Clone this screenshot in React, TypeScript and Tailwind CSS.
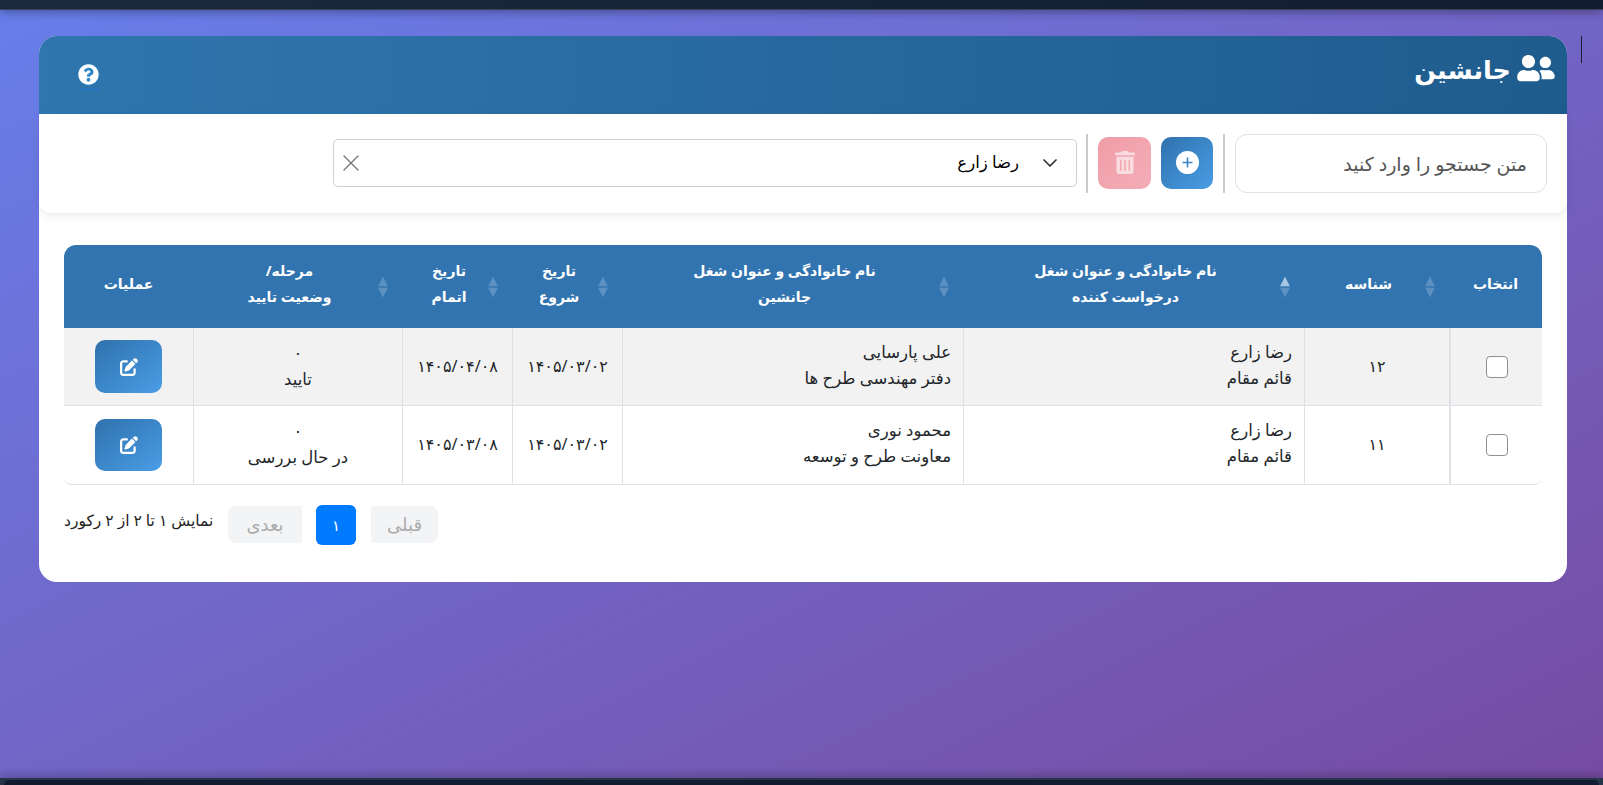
import { FaQuestionCircle, FaTrashAlt, FaUserFriends } from "react-icons/fa";
import { FaPenToSquare } from "react-icons/fa6";
import { ChevronDown, X } from "lucide-react";

const HEADERS = [
  { w: "w-[93px]", lines: ["انتخاب"], sort: false },
  { w: "w-[145px]", lines: ["شناسه"], sort: true },
  { w: "w-[341px]", lines: ["نام خانوادگی و عنوان شغل", "درخواست کننده"], sort: true, active: true },
  { w: "w-[341px]", lines: ["نام خانوادگی و عنوان شغل", "جانشین"], sort: true },
  { w: "w-[110px]", lines: ["تاریخ", "شروع"], sort: true },
  { w: "w-[110px]", lines: ["تاریخ", "اتمام"], sort: true },
  { w: "w-[209px]", lines: ["مرحله/", "وضعیت تایید"], sort: true },
  { w: "w-[129px]", lines: ["عملیات"], sort: false },
];

const ROWS = [
  { id: "۱۲", reqName: "رضا زارع", reqJob: "قائم مقام", subName: "علی پارسایی", subJob: "دفتر مهندسی طرح ها", start: "۱۴۰۵/۰۳/۰۲", end: "۱۴۰۵/۰۴/۰۸", status: "تایید", bg: "bg-[#f2f2f2]", h: "h-[78px]", btn: "h-[53px]", br: "", bl: "" },
  { id: "۱۱", reqName: "رضا زارع", reqJob: "قائم مقام", subName: "محمود نوری", subJob: "معاونت طرح و توسعه", start: "۱۴۰۵/۰۳/۰۲", end: "۱۴۰۵/۰۳/۰۸", status: "در حال بررسی", bg: "bg-white", h: "h-[79px]", btn: "h-[52px]", br: "rounded-br-[8px]", bl: "rounded-bl-[8px]" },
];

function SortIcon({ active }: { active?: boolean }) {
  return (
    <span className="absolute right-[14px] top-1/2 flex -translate-y-1/2 flex-col gap-[1px]">
      <svg width="10" height="10" viewBox="0 0 10 10"><path d="M5 0 10 10H0Z" fill={active ? "#a8c6e2" : "#5c90c0"} /></svg>
      <svg width="10" height="10" viewBox="0 0 10 10"><path d="M5 10 0 0H10Z" fill="#5c90c0" /></svg>
    </span>
  );
}

export default function App() {
  return (
    <div dir="rtl" className="relative flex h-[785px] w-full flex-col overflow-hidden bg-gradient-to-br from-[#667eea] to-[#764ba2] font-['Noto_Sans','DejaVu_Sans',sans-serif] text-[#212529]">
      <div className="h-[10px] shrink-0 border-b border-[#3a4254] bg-gradient-to-l from-[#111c30] to-[#1c2a3f] shadow-[0_2px_10px_rgba(0,0,0,0.35)]" />

      {/* کارت اصلی */}
      <main className="flex-1 pr-[36px] pt-[26px]">
        <div className="h-[546px] w-[1528px] rounded-[18px] bg-white">
          <header className="flex h-[78px] items-center justify-between rounded-t-[18px] bg-gradient-to-l from-[#1f5c8e] to-[#2f76ae] pl-[39px] pr-[12px] text-white">
            <div className="mb-[10px] flex items-center gap-[6px]">
              <FaUserFriends className="mb-[5px] h-[30px] w-[38px]" />
              <h1 className="text-[25.5px] font-bold leading-none">جانشین</h1>
            </div>
            <a className="mt-[4px] block border-b border-[#1d6fd0] pb-[4px]">
              <span className="block rounded-full bg-[#2f86c8]">
                <FaQuestionCircle className="h-[21px] w-[21px] text-white" />
              </span>
            </a>
          </header>

          {/* نوار ابزار */}
          <div className="flex h-[99px] items-center rounded-b-[12px] pb-[2px] pr-[20px] shadow-[0_3px_8px_rgba(0,0,0,0.08)]">
            <input
              readOnly
              placeholder="متن جستجو را وارد کنید"
              className="mt-[2px] h-[59px] w-[312px] rounded-[12px] border border-[#dfe1e8] px-[19px] text-[19px] outline-none placeholder:text-[#555]"
            />
            <span className="mx-[10px] mt-[2px] h-[59px] w-[2px] bg-[#cccccc]" />
            <button className="flex h-[52px] w-[52px] items-center justify-center rounded-[10px] bg-gradient-to-br from-[#2f72ad] to-[#4a9de6]">
              <svg width="23" height="23" viewBox="0 0 23 23">
                <circle cx="11.5" cy="11.5" r="11.5" fill="#fff" />
                <path d="M11.5 6.5v10M6.5 11.5h10" stroke="#3b85c6" strokeWidth="1.6" />
              </svg>
            </button>
            <button className="mr-[10px] flex h-[52px] w-[53px] items-center justify-center rounded-[10px] bg-gradient-to-br from-[#ef9ca6] to-[#f4aeb9]">
              <FaTrashAlt className="h-[23px] w-[20px] text-white/60" />
            </button>
            <span className="ml-[9px] mr-[10px] mt-[2px] h-[59px] w-[2px] bg-[#cccccc]" />
            <div className="flex h-[48px] w-[744px] items-center rounded-[5px] border border-[#ccd0d5] pl-[3px] pr-[14px]">
              <ChevronDown size={24} strokeWidth={1.7} className="text-[#333]" />
              <span className="mr-[19px] text-[16.5px] text-black">رضا زارع</span>
              <X size={28} strokeWidth={1.2} className="mr-auto text-[#777]" />
            </div>
          </div>

          {/* جدول */}
          <div className="mr-[25px] mt-[32px] w-[1478px]">
            <table className="w-full table-fixed border-separate border-spacing-0 text-center text-[16px]">
              <thead>
                <tr className="h-[83px] text-white">
                  {HEADERS.map((h, i) => (
                    <th
                      key={i}
                      className={`relative bg-[#3274b0] pb-[5px] text-[14px] font-bold leading-[26px] ${h.w} ${h.sort ? "pl-[8px] pr-[24px]" : "px-[8px]"} ${i === 0 ? "rounded-tr-[12px]" : ""} ${i === HEADERS.length - 1 ? "rounded-tl-[12px]" : ""}`}
                    >
                      {h.sort && <SortIcon active={h.active} />}
                      {h.lines.map((l) => <div key={l}>{l}</div>)}
                    </th>
                  ))}
                </tr>
              </thead>
              <tbody>
                {ROWS.map((r) => (
                  <tr key={r.id} className={`${r.h} ${r.bg}`}>
                    <td className={`border-b border-l-2 border-[#dee2e6] ${r.br}`}>
                      <span className="mx-auto block h-[22px] w-[22px] rounded-[4px] border border-[#8f8f8f] bg-white" />
                    </td>
                    <td className="border-b border-l border-[#dee2e6] pb-[2px]">{r.id}</td>
                    <td className="border-b border-l border-[#dee2e6] pb-[4px] pr-[12px] text-right text-[16.5px] leading-[26px]">
                      <div>{r.reqName}</div>
                      <div>{r.reqJob}</div>
                    </td>
                    <td className="border-b border-l border-[#dee2e6] pb-[4px] pr-[12px] text-right text-[16.5px] leading-[26px]">
                      <div>{r.subName}</div>
                      <div>{r.subJob}</div>
                    </td>
                    <td className="border-b border-l border-[#dee2e6] pb-[2px]">{r.start}</td>
                    <td className="border-b border-l border-[#dee2e6] pb-[2px]">{r.end}</td>
                    <td className="border-b border-l border-[#dee2e6] pb-[2px] text-[16.5px] leading-[26px]">
                      <div>۰</div>
                      <div>{r.status}</div>
                    </td>
                    <td className={`border-b border-[#dee2e6] ${r.bl}`}>
                      <button className={`mx-auto flex w-[67px] items-center justify-center rounded-[10px] bg-gradient-to-br from-[#2f72ad] to-[#4a9de6] ${r.btn}`}>
                        <FaPenToSquare className="h-[18px] w-[18px] text-white" />
                      </button>
                    </td>
                  </tr>
                ))}
              </tbody>
            </table>

            {/* صفحه‌بندی */}
            <div className="mt-[20px] flex items-center justify-end">
              <button className="mb-[2px] h-[37px] w-[67px] rounded-l-[2px] rounded-r-[8px] bg-[#f3f4f6] text-[18px] text-[#aaaaaa]">قبلی</button>
              <button className="ml-[14px] mr-[15px] h-[40px] w-[40px] rounded-[6px] bg-[#007bff] text-[15px] text-white">۱</button>
              <button className="mb-[2px] h-[37px] w-[74px] rounded-l-[8px] rounded-r-[2px] bg-[#f3f4f6] text-[18px] text-[#aaaaaa]">بعدی</button>
              <span className="mb-[8px] mr-[12px] w-[152px] whitespace-nowrap text-left text-[15.5px] text-[#222]">نمایش ۱ تا ۲ از ۲ رکورد</span>
            </div>
          </div>
        </div>
      </main>

      <div className="h-[7px] shrink-0 bg-[#27344a] px-[4px] pt-[2px] shadow-[0_-2px_10px_rgba(0,0,0,0.3)]">
        <div className="h-full rounded-t-[8px] bg-[#111c30]" />
      </div>
      <span className="absolute left-[1581px] top-[36px] h-[27px] w-px bg-[#1c1c2c]" />
    </div>
  );
}
